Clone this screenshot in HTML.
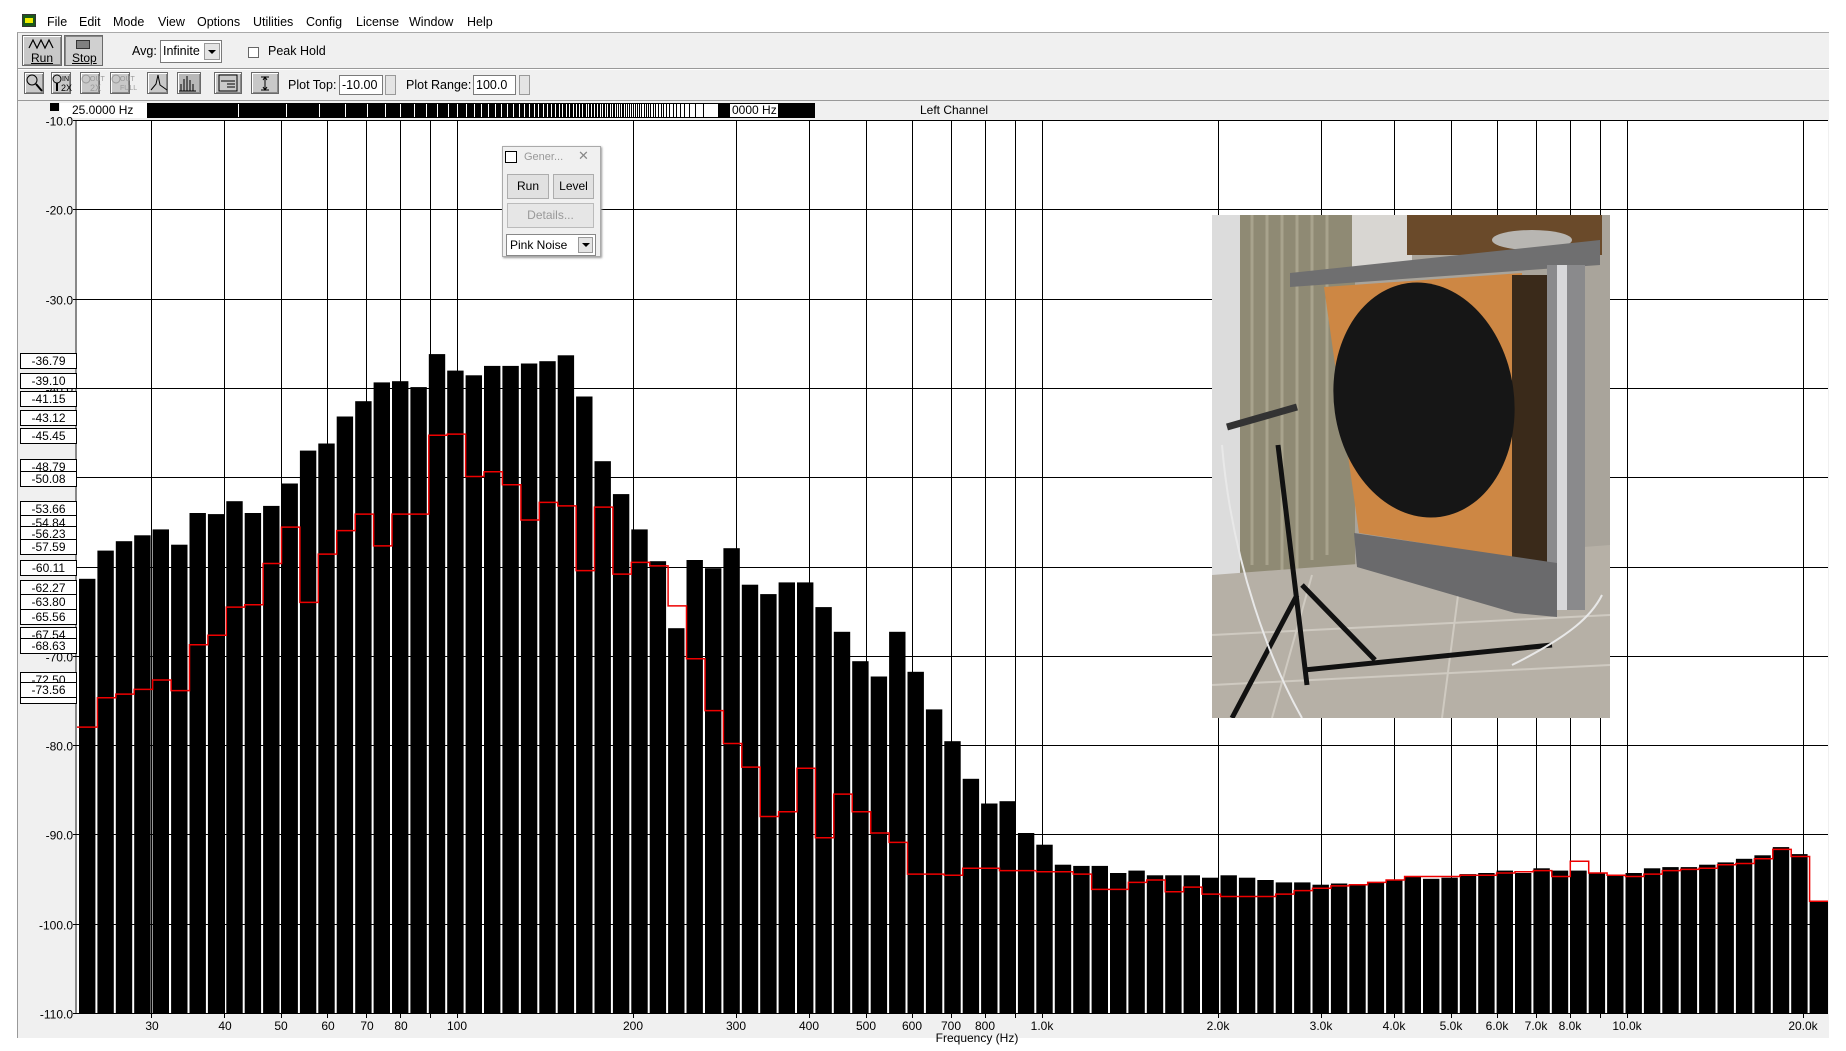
<!DOCTYPE html>
<html><head><meta charset="utf-8">
<style>
*{margin:0;padding:0;box-sizing:border-box}
body{width:1846px;height:1051px;background:#fff;position:relative;overflow:hidden;font-family:"Liberation Sans",Arial,sans-serif;font-size:12px;color:#000}
.a{position:absolute}
.menu span{position:absolute;top:15px;font-size:12.5px}
.btn{position:absolute;background:#c8c8c8;border:1px solid #6a6a6a;box-shadow:inset 1px 1px 0 #fff,inset -1px -1px 0 #888}
.inp{position:absolute;background:#fff;border:1px solid #7a7a7a;font-size:12.5px;padding-left:2px}
.fl{position:absolute;top:1019px;font-size:12px;transform:translateX(-50%)}
.vb{position:absolute;left:20px;width:57px;height:16px;border:1px solid #000;background:#fff;font-size:12px;text-align:center;line-height:15px}
</style></head><body>
<div class="a" style="left:22px;top:14px;width:14px;height:13px;background:#1a5a1a;border:1px solid #333"><div class="a" style="left:2px;top:3px;width:8px;height:5px;background:#ee0"></div></div>
<div class="menu">
<span style="left:47px">File</span><span style="left:79px">Edit</span><span style="left:113px">Mode</span><span style="left:158px">View</span><span style="left:197px">Options</span><span style="left:253px">Utilities</span><span style="left:306px">Config</span><span style="left:356px">License</span><span style="left:409px">Window</span><span style="left:467px">Help</span>
</div>
<div class="a" style="left:17px;top:32px;width:1812px;height:1006px;background:#f0f0f0;border-left:1px solid #999;border-top:1px solid #aaa"></div>
<div class="a" style="left:18px;top:68px;width:1811px;height:2px;border-top:1px solid #999;border-bottom:1px solid #fff"></div>
<div class="a" style="left:18px;top:100px;width:1811px;height:1px;background:#999"></div>
<div class="btn" style="left:22px;top:35px;width:40px;height:31px"></div>
<svg class="a" style="left:28px;top:38px" width="28" height="12"><path d="M1 10 L5 2 L9 10 L13 2 L17 10 L21 2 L25 10" fill="none" stroke="#000" stroke-width="1.2"/></svg>
<div class="a" style="left:31px;top:51px;font-size:12px;text-decoration:underline">Run</div>
<div class="btn" style="left:64px;top:35px;width:39px;height:31px;background:#d0d0d0;box-shadow:inset 1px 1px 0 #888"></div>
<div class="a" style="left:76px;top:40px;width:14px;height:9px;background:#808080;border:1px solid #333"></div>
<div class="a" style="left:72px;top:51px;font-size:12px;text-decoration:underline">Stop</div>
<div class="a" style="left:132px;top:44px;font-size:12.5px">Avg:</div>
<div class="inp" style="left:160px;top:40px;width:62px;height:23px;line-height:21px">Infinite</div>
<div class="a" style="left:204px;top:43px;width:16px;height:17px;background:#e4e4e4;border:1px solid #999"></div>
<div class="a" style="left:208px;top:50px;width:0;height:0;border-left:4px solid transparent;border-right:4px solid transparent;border-top:4px solid #000"></div>
<div class="a" style="left:248px;top:47px;width:11px;height:11px;border:1px solid #666;background:#fff"></div>
<div class="a" style="left:268px;top:44px;font-size:12.5px">Peak Hold</div>
<div class="btn" style="left:24px;top:72px;width:20px;height:22px"></div>
<div class="btn" style="left:51px;top:72px;width:20px;height:22px"></div>
<div class="btn" style="left:80px;top:72px;width:20px;height:22px"></div>
<div class="btn" style="left:110px;top:72px;width:20px;height:22px"></div>
<div class="btn" style="left:147px;top:72px;width:21px;height:22px"></div>
<div class="btn" style="left:177px;top:72px;width:24px;height:22px;background:#b8b8b8"></div>
<div class="btn" style="left:214px;top:72px;width:28px;height:22px"></div>
<div class="btn" style="left:251px;top:72px;width:28px;height:22px"></div>
<svg class="a" style="left:24px;top:72px" width="260" height="22" fill="none" stroke="#000">
<circle cx="8" cy="8" r="5"/><path d="M12 12 L18 19" stroke-width="2"/>
<circle cx="33" cy="7" r="4"/><path d="M33 11 V19" stroke-width="2"/><text x="38" y="9" font-size="7" fill="#000" stroke="none">IN</text><text x="37" y="19" font-size="9" fill="#000" stroke="none">2X</text>
<circle cx="62" cy="7" r="4" stroke="#999"/><text x="66" y="9" font-size="7" fill="#999" stroke="none">OUT</text><text x="66" y="19" font-size="9" fill="#999" stroke="none">2X</text>
<circle cx="92" cy="7" r="4" stroke="#999"/><text x="96" y="9" font-size="7" fill="#999" stroke="none">OUT</text><text x="96" y="18" font-size="7" fill="#999" stroke="none">FULL</text>
<path d="M127 18 L132 12 L134 3 L136 13 L143 18"/>
<path d="M157 19 V12 M160 19 V7 M163 19 V4 M166 19 V8 M169 19 V12 M155 19 H172"/>
<rect x="195" y="3" width="18" height="16"/><path d="M197 9 H211 M203 12 H211 M203 15 H211"/>
<path d="M237 5 H245 M237 18 H245 M241 5 V18 M239 8 L241 5 L243 8 M239 15 L241 18 L243 15"/>
</svg>
<div class="a" style="left:288px;top:78px;font-size:12.5px">Plot Top:</div>
<div class="inp" style="left:339px;top:75px;width:44px;height:20px;line-height:18px">-10.00</div>
<div class="a" style="left:385px;top:75px;width:11px;height:20px;background:#e4e4e4;border:1px solid #999"></div>
<div class="a" style="left:406px;top:78px;font-size:12.5px">Plot Range:</div>
<div class="inp" style="left:473px;top:75px;width:43px;height:20px;line-height:18px">100.0</div>
<div class="a" style="left:519px;top:75px;width:11px;height:20px;background:#e4e4e4;border:1px solid #999"></div>
<div class="a" style="left:50px;top:103px;width:9px;height:8px;background:#000"></div>
<div class="a" style="left:147px;top:103px;width:668px;height:15px;background:#000"></div>
<svg id="tk" class="a" style="left:147px;top:103px" width="668" height="15"></svg>
<div class="a" style="left:60px;top:103px;width:87px;height:15px;background:#fff;font-size:12px;line-height:15px;padding-left:12px">25.0000 Hz</div>
<div class="a" style="left:730px;top:104px;width:48px;height:13px;background:#fff;font-size:12px;line-height:13px;padding-left:2px">0000 Hz</div>
<div class="a" style="left:920px;top:103px;font-size:12px">Left Channel</div>
<svg id="pl" class="a" style="left:0;top:0" width="1846" height="1051"></svg>
<div class="vb" style="top:353px">-36.79</div>
<div class="vb" style="top:373px">-39.10</div>
<div class="vb" style="top:391px">-41.15</div>
<div class="vb" style="top:410px">-43.12</div>
<div class="vb" style="top:428px">-45.45</div>
<div class="vb" style="top:459px">-48.79</div>
<div class="vb" style="top:471px">-50.08</div>
<div class="vb" style="top:501px">-53.66</div>
<div class="vb" style="top:515px">-54.84</div>
<div class="vb" style="top:526px">-56.23</div>
<div class="vb" style="top:539px">-57.59</div>
<div class="vb" style="top:560px">-60.11</div>
<div class="vb" style="top:580px">-62.27</div>
<div class="vb" style="top:594px">-63.80</div>
<div class="vb" style="top:609px">-65.56</div>
<div class="vb" style="top:627px">-67.54</div>
<div class="vb" style="top:638px">-68.63</div>
<div class="vb" style="top:672px">-72.50</div>
<div class="vb" style="top:682px">-73.56</div>
<div class="vb" style="top:697px;height:7px"></div>
<div class="fl" style="left:152px">30</div><div class="fl" style="left:225px">40</div><div class="fl" style="left:281px">50</div><div class="fl" style="left:328px">60</div><div class="fl" style="left:367px">70</div><div class="fl" style="left:401px">80</div><div class="fl" style="left:457px">100</div><div class="fl" style="left:633px">200</div><div class="fl" style="left:736px">300</div><div class="fl" style="left:809px">400</div><div class="fl" style="left:866px">500</div><div class="fl" style="left:912px">600</div><div class="fl" style="left:951px">700</div><div class="fl" style="left:985px">800</div><div class="fl" style="left:1042px">1.0k</div><div class="fl" style="left:1218px">2.0k</div><div class="fl" style="left:1321px">3.0k</div><div class="fl" style="left:1394px">4.0k</div><div class="fl" style="left:1451px">5.0k</div><div class="fl" style="left:1497px">6.0k</div><div class="fl" style="left:1536px">7.0k</div><div class="fl" style="left:1570px">8.0k</div><div class="fl" style="left:1627px">10.0k</div><div class="fl" style="left:1803px">20.0k</div>
<div class="fl" style="left:977px;top:1031px">Frequency (Hz)</div>
<svg class="a" style="left:1212px;top:215px" width="398" height="503" viewBox="0 0 398 503">
<rect width="398" height="503" fill="#a9a49b"/>
<rect x="0" y="0" width="35" height="390" fill="#dcdcdc"/>
<rect x="28" y="0" width="115" height="360" fill="#8f8a74"/>
<path d="M40 0 V350 M55 0 V350 M70 0 V355 M85 0 V355 M100 0 V345 M115 0 V340" stroke="#a8a38d" stroke-width="3"/>
<rect x="140" y="0" width="60" height="60" fill="#d8d6d2"/>
<rect x="195" y="0" width="195" height="40" fill="#6a4a2a"/>
<path d="M0 360 L398 330 V503 H0 Z" fill="#b6b0a6"/>
<path d="M0 420 L398 400 M0 470 L398 450 M100 360 L60 503 M250 350 L230 503" stroke="#cfcac1" stroke-width="2"/>
<ellipse cx="320" cy="25" rx="40" ry="10" fill="#b8b6b2"/>
<path d="M78 58 L388 25 L388 50 L78 72 Z" fill="#6f6f70"/>
<path d="M112 72 L310 58 L318 345 L147 318 Z" fill="#cd8744"/>
<rect x="300" y="60" width="40" height="290" fill="#3a2a1a"/>
<ellipse cx="212" cy="185" rx="90" ry="118" transform="rotate(-8 212 185)" fill="#161616"/>
<rect x="335" y="50" width="38" height="345" fill="#8a8a8c"/><rect x="345" y="50" width="10" height="345" fill="#d8d8da"/>
<path d="M142 318 L345 348 L345 402 L303 398 L145 352 Z" fill="#6a6a6c"/>
<path d="M66 230 L95 470 M85 380 L20 503 M90 370 L163 445 M92 455 L340 430" stroke="#111" stroke-width="5" fill="none"/>
<path d="M15 212 L85 192" stroke="#333" stroke-width="7"/>
<path d="M10 230 C20 350 60 450 90 503 M300 450 C360 420 380 400 390 380" stroke="#e8e8e8" stroke-width="2" fill="none"/>
</svg>
<div class="a" style="left:502px;top:146px;width:99px;height:111px;background:#f0f0f0;border:1px solid #aaa;box-shadow:1px 1px 2px #999"></div>
<div class="a" style="left:505px;top:151px;width:12px;height:12px;border:1px solid #000;background:#fff"></div>
<div class="a" style="left:524px;top:151px;font-size:11px;color:#999">Gener...</div>
<div class="a" style="left:578px;top:148px;font-size:13px;color:#888">✕</div>
<div class="a" style="left:507px;top:174px;width:42px;height:25px;background:#e1e1e1;border:1px solid #adadad;text-align:center;line-height:23px">Run</div>
<div class="a" style="left:553px;top:174px;width:41px;height:25px;background:#e1e1e1;border:1px solid #adadad;text-align:center;line-height:23px">Level</div>
<div class="a" style="left:507px;top:203px;width:87px;height:25px;background:#e6e6e6;border:1px solid #bbb;text-align:center;line-height:23px;color:#999">Details...</div>
<div class="a" style="left:506px;top:234px;width:90px;height:22px;background:#fff;border:1px solid #888;line-height:20px;padding-left:3px">Pink Noise</div>
<div class="a" style="left:578px;top:237px;width:15px;height:16px;background:#e4e4e4;border:1px solid #999"></div>
<div class="a" style="left:582px;top:243px;border-left:4px solid transparent;border-right:4px solid transparent;border-top:4px solid #000"></div>
<script>
(function(){
var NS="http://www.w3.org/2000/svg";
function el(p,t,a){var e=document.createElementNS(NS,t);for(var k in a)e.setAttribute(k,a[k]);p.appendChild(e);return e;}
var pl=document.getElementById('pl');
var L=77,T=120,R=1828,B=1013;
function fx(f){return 457+585*Math.log10(f/100);}
function dy(d){return T+(-10-d)*8.93;}
el(pl,'rect',{x:L,y:T,width:R-L,height:B-T,fill:'#fff'});
el(pl,'line',{x1:L-1,y1:T,x2:L-1,y2:B,stroke:'#888','stroke-width':2});
var fs=[30,40,50,60,70,80,90,100,200,300,400,500,600,700,800,900,1000,2000,3000,4000,5000,6000,7000,8000,9000,10000,20000];
fs.forEach(function(f){var x=Math.round(fx(f))+.5;el(pl,'line',{x1:x,y1:T,x2:x,y2:B+5,stroke:'#000'});});
for(var d=-10;d>=-110;d-=10){var y=Math.round(dy(d))+.5;el(pl,'line',{x1:L-4,y1:y,x2:R,y2:y,stroke:'#000'});
var t=el(pl,'text',{x:73,y:y+5,'text-anchor':'end','font-size':12,'font-family':'Liberation Sans'});t.textContent=d.toFixed(1);}
var bt=[492,468,460,455,450,463,436,437,426,436,430,411,383,377,354,341,325,324,329,301,315,319,311,311,309,307,302,337,392,420,450,477,534,476,483,466,497,505,495,495,516,537,562,575,537,571,603,630,662,683,681,708,
718,735,736,736,742,740,744,744,744,746,744,746,748,750,750,752,751,752,750,748,745,747,746,743,742,740,742,738,740,740,742,744,742,738,737,737,735,733,730,727,720,726,766];
var rd=[618,593,590,586,578,587,548,540,516,514,479,448,512,471,451,437,464,437,437,370,369,405,401,412,442,427,430,485,431,488,478,481,515,560,604,632,652,694,690,653,712,675,690,708,716,743,743,744,738,738,740,740,
741,741,743,756,756,750,748,758,754,760,762,762,762,760,757,755,753,752,750,748,745,745,745,744,744,742,741,740,745,732,742,744,745,743,740,739,738,735,734,730,722,728,766];
function cy(d){return 120+(d-102)*1.1765;}
var n=bt.length,x0=79,w=(R-x0)/n,path='';
for(var i=0;i<n;i++){var xa=x0+i*w,xb=xa+w-2;if(i==n-1)xb=R;var y=cy(bt[i]);
el(pl,'rect',{x:xa.toFixed(1),y:y.toFixed(1),width:(xb-xa).toFixed(1),height:(B-y).toFixed(1),fill:'#000'});
var ry=cy(rd[i]).toFixed(1);path+=(i==0?'M'+L+' ':'L'+xa.toFixed(1)+' ')+ry+' L'+(xa+w).toFixed(1)+' '+ry+' ';}
el(pl,'path',{d:path,fill:'none',stroke:'#e00','stroke-width':1.5});
var tk=document.getElementById('tk');
for(var k=2;k<=120;k++){var x=Math.round(560*Math.log(k)/Math.log(120))+10;el(tk,'rect',{x:x,y:1,width:1,height:13,fill:'#fff'});}
})();
</script>
</body></html>
